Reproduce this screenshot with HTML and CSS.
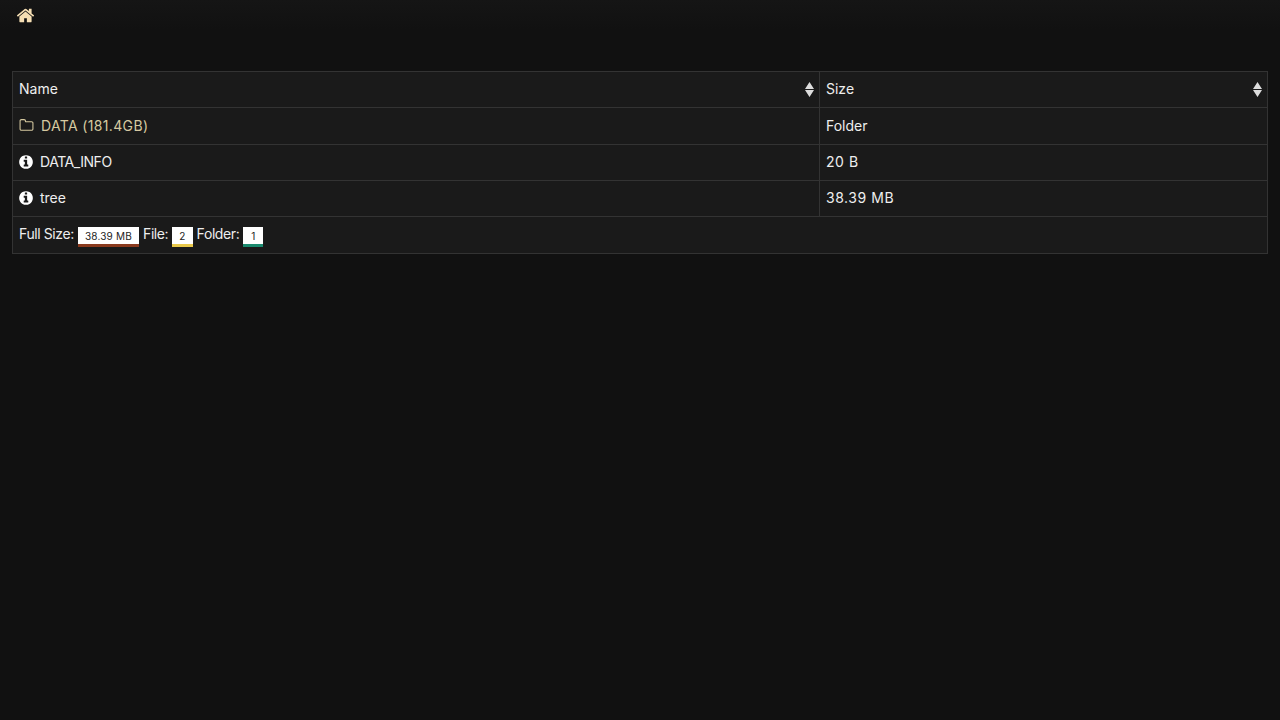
FILE: index.html
```html
<!DOCTYPE html>
<html lang="en">
<head>
<meta charset="utf-8">
<title>Index</title>
<link rel="stylesheet" href="styles.css">
</head>
<body>
<nav class="topbar">
  <a class="home" href="#"><svg class="home-icon" viewBox="0 0 1792 1792"><path d="M1472 992v480q0 26-19 45t-45 19h-384v-384h-256v384h-384q-26 0-45-19t-19-45v-480q0-1 .5-3t.5-3l575-474 575 474q1 2 1 6zm223-69l-62 74q-8 9-21 11h-3q-13 0-21-7l-692-577-692 577q-12 8-24 7-13-2-21-11l-62-74q-8-10-7-23.500t11-21.500l719-599q32-26 76-26t76 26l244 204v-195q0-14 9-23t23-9h192q14 0 23 9t9 23v408l219 182q10 8 11 21.500t-7 23.500z"/></svg></a>
</nav>
<main class="content">
  <table class="listing">
    <thead>
      <tr>
        <th class="col-name">Name<svg class="sort" viewBox="0 0 9 15"><path d="M4.500 0L9 7H0zM4.500 15L0 8h9z"/></svg></th>
        <th>Size<svg class="sort" viewBox="0 0 9 15"><path d="M4.500 0L9 7H0zM4.500 15L0 8h9z"/></svg></th>
      </tr>
    </thead>
    <tbody>
      <tr class="row-tall">
        <td><a class="folder" href="#"><svg class="folder-icon" viewBox="0 0 1792 1792"><path d="M1600 1312v-704q0-40-28-68t-68-28h-704q-40 0-68-28t-28-68v-64q0-40-28-68t-68-28h-320q-40 0-68 28t-28 68v960q0 40 28 68t68 28h1216q40 0 68-28t28-68zm128-704v704q0 92-66 158t-158 66h-1216q-92 0-158-66t-66-158v-960q0-92 66-158t158-66h320q92 0 158 66t66 158v32h672q92 0 158 66t66 158z"/></svg><span class="wide">DATA (181.4GB)</span></a></td>
        <td>Folder</td>
      </tr>
      <tr>
        <td><svg class="info-icon" viewBox="0 0 1792 1792"><path d="M1152 1376v-160q0-14-9-23t-23-9h-96v-512q0-14-9-23t-23-9h-320q-14 0-23 9t-9 23v160q0 14 9 23t23 9h96v320h-96q-14 0-23 9t-9 23v160q0 14 9 23t23 9h448q14 0 23-9t9-23zm-128-896v-160q0-14-9-23t-23-9h-192q-14 0-23 9t-9 23v160q0 14 9 23t23 9h192q14 0 23-9t9-23zm640 416q0 209-103 385.500t-279.500 279.500-385.500 103-385.500-103-279.500-279.500-103-385.500 103-385.500 279.500-279.500 385.500-103 385.500 103 279.500 279.500 103 385.500z"/></svg><span class="narrow">DATA_INFO</span></td>
        <td class="num">20 B</td>
      </tr>
      <tr>
        <td><svg class="info-icon" viewBox="0 0 1792 1792"><path d="M1152 1376v-160q0-14-9-23t-23-9h-96v-512q0-14-9-23t-23-9h-320q-14 0-23 9t-9 23v160q0 14 9 23t23 9h96v320h-96q-14 0-23 9t-9 23v160q0 14 9 23t23 9h448q14 0 23-9t9-23zm-128-896v-160q0-14-9-23t-23-9h-192q-14 0-23 9t-9 23v160q0 14 9 23t23 9h192q14 0 23-9t9-23zm640 416q0 209-103 385.500t-279.500 279.500-385.500 103-385.500-103-279.500-279.500-103-385.500 103-385.500 279.500-279.500 385.500-103 385.500 103 279.500 279.500 103 385.500z"/></svg>tree</td>
        <td class="num">38.39 MB</td>
      </tr>
    </tbody>
    <tfoot>
      <tr class="row-tall">
        <td colspan="2"><div class="summary"><span class="label">Full Size:</span><span class="badge badge-size">38.39 MB</span><span class="label">File:</span><span class="badge badge-file">2</span><span class="label">Folder:</span><span class="badge badge-folder">1</span></div></td>
      </tr>
    </tfoot>
  </table>
</main>
</body>
</html>
```
FILE: styles.css
```css
html, body { margin: 0; padding: 0; height: 100%; }
body {
  background: #111111;
  color: #eeeeee;
  font-family: Inter, "Liberation Sans", Arial, sans-serif;
  font-size: 14px;
  line-height: 20px;
}
.topbar {
  height: 30px;
  box-sizing: border-box;
  padding: 6px 0 0 16px;
  background: linear-gradient(#151515, #111111);
}
.home { display: block; width: 19px; height: 19px; }
.home-icon { display: block; width: 19px; height: 19px; fill: #f5deb3; }
.content { padding: 41px 12px 0; }
.listing {
  width: 1256px;
  table-layout: fixed;
  border-collapse: collapse;
  background: #1a1a1a;
  border: 1px solid #333333;
}
.listing th, .listing td {
  position: relative;
  border: 1px solid #333333;
  padding: 0 6px 2px;
  height: 33px;
  text-align: left;
  font-weight: 400;
  vertical-align: middle;
}
.listing .row-tall td { padding-bottom: 0; height: 36px; }
.col-name { width: 794px; }
.sort { position: absolute; right: 5px; top: 10px; width: 9px; height: 15px; fill: #dddddd; }
.wide { letter-spacing: 0.35px; }
.narrow { letter-spacing: -0.45px; }
.num { letter-spacing: 0.55px; }
.summary { display: flex; align-items: flex-start; gap: 4px; padding-top: 1px; }
.label { letter-spacing: -0.4px; }
.folder { color: #d6c9a0; text-decoration: none; }
.folder-icon { width: 15px; height: 15px; margin-right: 7px; fill: #d6c9a0; vertical-align: -2px; }
.info-icon { width: 16px; height: 16px; margin: 0 6px 0 -1px; fill: #ffffff; vertical-align: -3px; }
.badge {
  box-sizing: border-box;
  height: 20px;
  min-width: 20px;
  margin-top: 3px;
  padding: 1px 7px 0;
  text-align: center;
  background: #ffffff;
  color: #222222;
  font-size: 10px;
  line-height: 16px;
  letter-spacing: 0.2px;
}
.badge-size { border-bottom: 3px solid #8a3a1e; }
.badge-file { border-bottom: 3px solid #e8c84a; }
.badge-folder { border-bottom: 3px solid #1a8a6e; }
```
